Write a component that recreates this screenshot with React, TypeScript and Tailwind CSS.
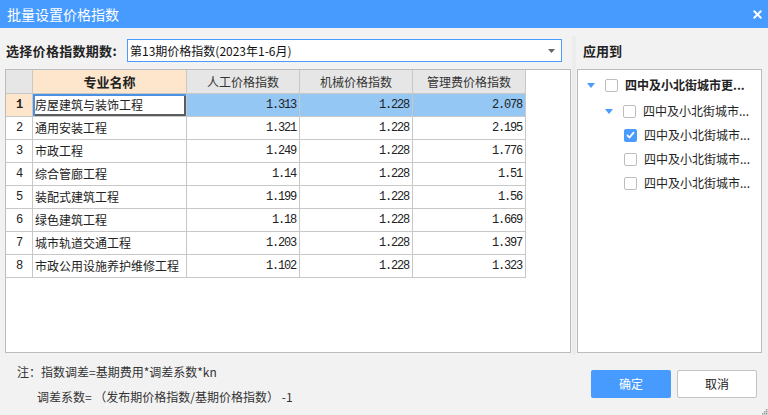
import { X } from 'lucide-react';

const rows = [
  { name: '房屋建筑与装饰工程', labor: '1.313', machine: '1.228', admin: '2.078' },
  { name: '通用安装工程', labor: '1.321', machine: '1.228', admin: '2.195' },
  { name: '市政工程', labor: '1.249', machine: '1.228', admin: '1.776' },
  { name: '综合管廊工程', labor: '1.14', machine: '1.228', admin: '1.51' },
  { name: '装配式建筑工程', labor: '1.199', machine: '1.228', admin: '1.56' },
  { name: '绿色建筑工程', labor: '1.18', machine: '1.228', admin: '1.669' },
  { name: '城市轨道交通工程', labor: '1.203', machine: '1.228', admin: '1.397' },
  { name: '市政公用设施养护维修工程', labor: '1.102', machine: '1.228', admin: '1.323' },
];

const cjk = "font-['Microsoft_YaHei','Noto_Sans_CJK_SC',sans-serif]";
const mono = "font-['Liberation_Mono','Noto_Sans_CJK_SC',monospace] text-[12px] tracking-[-1.2px]";

function Caret() {
  return (
    <svg width="8" height="5" viewBox="0 0 8 5" className="shrink-0">
      <path d="M0 0 L8 0 L4 5 Z" fill="#4a9bff" />
    </svg>
  );
}

function Checkbox({ checked = false }: { checked?: boolean }) {
  if (checked) {
    return (
      <div className="w-[13px] h-[13px] rounded-[2px] bg-[#4a9bff] flex items-center justify-center shrink-0">
        <svg width="9" height="8" viewBox="0 0 9 8">
          <path d="M1 4 L3.5 6.5 L8 1.2" stroke="white" strokeWidth="1.8" fill="none" />
        </svg>
      </div>
    );
  }
  return <div className="w-[13px] h-[13px] rounded-[2px] border border-[#bdbdbd] bg-white shrink-0" />;
}

export default function App() {
  return (
    <div className={`w-[768px] h-[415px] bg-[#f2f2f2] flex flex-col text-[#222] ${cjk} relative overflow-hidden`}>
      {/* Title bar */}
      <div className="h-[28px] bg-[#479bff] flex items-center justify-between pl-[7px] pr-[4px] shrink-0">
        <span className="text-white text-[14px]">批量设置价格指数</span>
        <X className="w-[13px] h-[13px] text-white" strokeWidth={3.5} />
      </div>

      <div className="flex h-[325px] pl-[5px] pt-[11px]">
        {/* Left side */}
        <div className="w-[566px] flex flex-col">
          <div className="h-[23px] flex items-center">
            <span className="w-[122px] pl-[1px] text-[13px] font-bold tracking-[0.3px] text-[#222]">选择价格指数期数:</span>
            <div className="w-[435px] h-[23px] border border-[#4a9bff] bg-white flex items-center justify-between pl-[2px] pr-[6px]">
              <span className="text-[12px] text-[#111]">第13期价格指数(2023年1-6月)</span>
              <svg width="7" height="4" viewBox="0 0 7 4">
                <path d="M0 0 L7 0 L3.5 4 Z" fill="#666" />
              </svg>
            </div>
          </div>

          {/* Table */}
          <div className="mt-[7px] h-[284px] border border-[#bcbcbc] bg-white">
            <div className="flex h-[24px] text-[12px] text-[#333]">
              <div className="w-[27px] bg-[#e6e6e6] border-r border-b border-[#c8c8c8]" />
              <div className="w-[154px] bg-[#fde6cb] border-r border-b border-[#c8c8c8] flex items-center justify-center font-bold text-[13px] text-[#222]">专业名称</div>
              <div className="w-[113px] bg-[#e6e6e6] border-r border-b border-[#c8c8c8] flex items-center justify-center">人工价格指数</div>
              <div className="w-[113px] bg-[#e6e6e6] border-r border-b border-[#c8c8c8] flex items-center justify-center">机械价格指数</div>
              <div className="w-[113px] bg-[#e6e6e6] border-r border-b border-[#c8c8c8] flex items-center justify-center">管理费价格指数</div>
            </div>
            {rows.map((r, i) => {
              const sel = i === 0;
              return (
                <div key={r.name} className="flex h-[23px] text-[#222]">
                  <div className={`w-[27px] border-r border-b border-[#c8c8c8] flex items-center justify-center ${mono} ${sel ? 'bg-[#fde6cb] font-bold' : ''}`}>
                    {i + 1}
                  </div>
                  <div className={`w-[154px] border-r border-b border-[#c8c8c8] flex items-center pl-[2px] text-[12px] ${sel ? 'shadow-[inset_2px_2px_0_#4a90e2,inset_-2px_-2px_0_#5c5c5c]' : ''}`}>
                    {r.name}
                  </div>
                  <div className={`w-[113px] border-r border-b border-[#c8c8c8] flex items-center justify-end pr-[3px] ${mono} ${sel ? 'bg-[#94c7f4]' : ''}`}>{r.labor}</div>
                  <div className={`w-[113px] border-r border-b border-[#c8c8c8] flex items-center justify-end pr-[3px] ${mono} ${sel ? 'bg-[#94c7f4]' : ''}`}>{r.machine}</div>
                  <div className={`w-[113px] border-r border-b border-[#c8c8c8] flex items-center justify-end pr-[3px] ${mono} ${sel ? 'bg-[#94c7f4]' : ''}`}>{r.admin}</div>
                </div>
              );
            })}
          </div>
        </div>

        {/* Splitter */}
        <div className="w-[4px] ml-[1px] mt-[-3px] mb-[-2px] bg-[#ececec]" />

        {/* Right side */}
        <div className="w-[185px] ml-[1px] flex flex-col">
          <div className="h-[23px] flex items-center pl-[6px] text-[13px] font-bold text-[#222]">应用到</div>
          <div className="mt-[7px] h-[284px] border border-[#bcbcbc] bg-white pt-[3px] text-[12px] text-[#222]">
            <div className="h-[24px] mb-[2px] flex items-center pl-[9px]">
              <Caret />
              <div className="ml-[10px]"><Checkbox /></div>
              <span className="ml-[7px] font-bold">四中及小北街城市更...</span>
            </div>
            <div className="h-[24px] flex items-center pl-[27px]">
              <Caret />
              <div className="ml-[10px]"><Checkbox /></div>
              <span className="ml-[7px]">四中及小北街城市...</span>
            </div>
            {[true, false, false].map((c, i) => (
              <div key={i} className="h-[24px] flex items-center pl-[46px]">
                <Checkbox checked={c} />
                <span className="ml-[7px]">四中及小北街城市...</span>
              </div>
            ))}
          </div>
        </div>
      </div>

      {/* Footer */}
      <div className="flex flex-1">
        <div className="w-[591px] pt-[10px] text-[12px] text-[#333]">
          <div className="pl-[17px] h-[18px] flex items-center">注：指数调差=基期费用*调差系数*kn</div>
          <div className="pl-[37px] h-[18px] mt-[7px] flex items-center">调差系数= （发布期价格指数/基期价格指数） -1</div>
        </div>
        <div className="flex gap-[6px] pt-[17px]">
          <button className="w-[80px] h-[28px] rounded-[2px] bg-[#479bff] text-white text-[12px]">确定</button>
          <button className="w-[80px] h-[28px] rounded-[2px] border border-[#c4c4c4] bg-white text-[#222] text-[12px]">取消</button>
        </div>
      </div>

      {/* Resize grip */}
      <svg width="7" height="7" viewBox="0 0 7 7" className="absolute right-0 bottom-0">
        <rect x="5" y="1" width="1.5" height="1.5" fill="#9a9a9a" />
        <rect x="3" y="3" width="1.5" height="1.5" fill="#9a9a9a" />
        <rect x="5" y="3" width="1.5" height="1.5" fill="#9a9a9a" />
        <rect x="1" y="5" width="1.5" height="1.5" fill="#9a9a9a" />
        <rect x="3" y="5" width="1.5" height="1.5" fill="#9a9a9a" />
        <rect x="5" y="5" width="1.5" height="1.5" fill="#9a9a9a" />
      </svg>
    </div>
  );
}
